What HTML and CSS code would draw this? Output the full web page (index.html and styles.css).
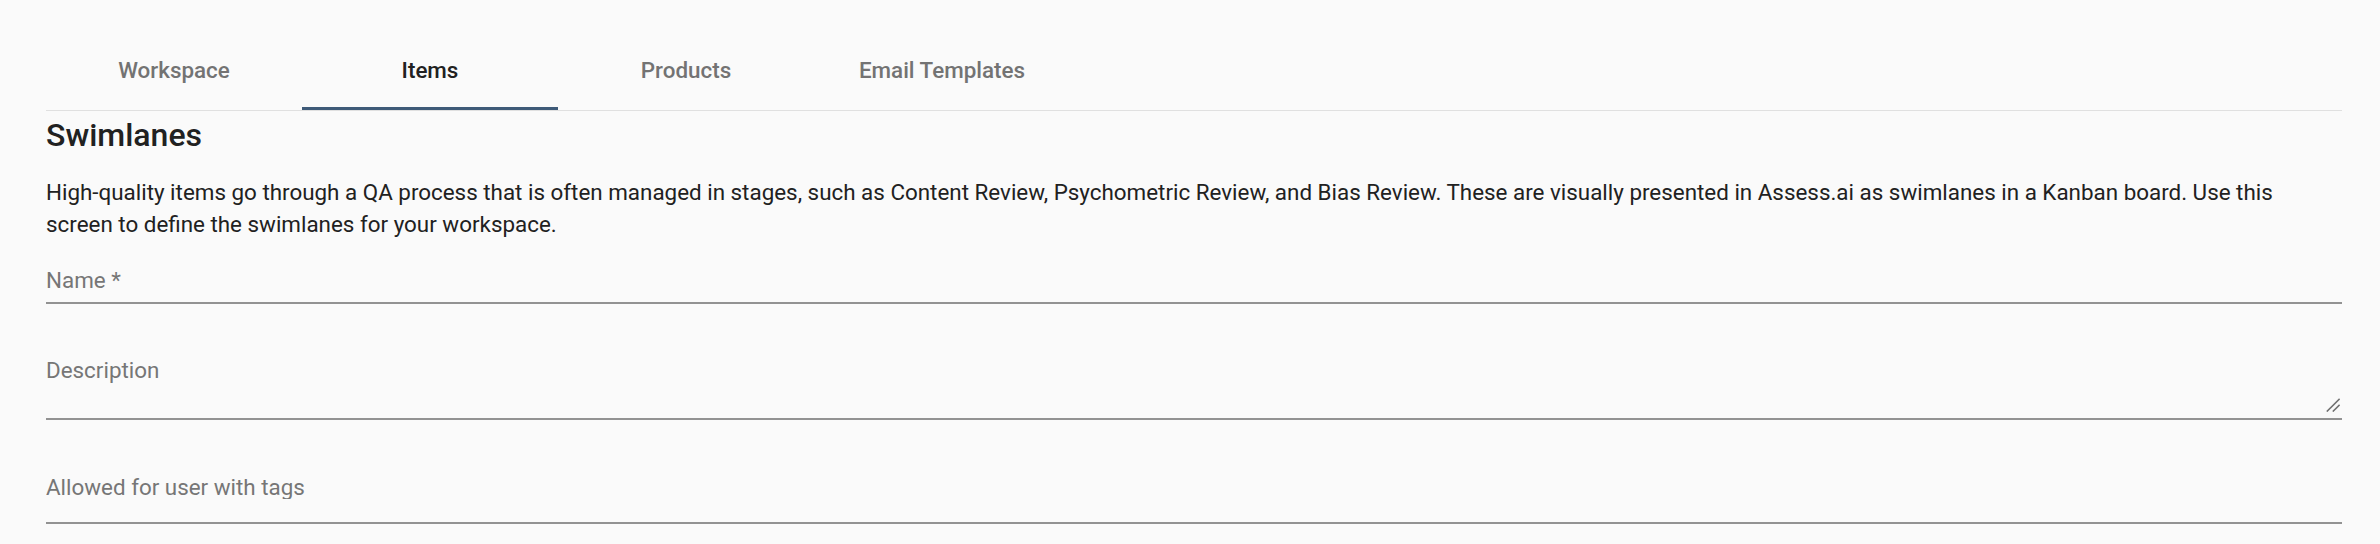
FILE: index.html
```html
<!DOCTYPE HTML>
<html>
<head>
    <meta charset="UTF-8">
    <title>Swimlanes</title>
    <link rel="stylesheet" href="styles.css">
</head>
<body>
<div id="page">

    <ul class="tabs">
        <li>Workspace</li>
        <li class="on">Items</li>
        <li>Products</li>
        <li>Email Templates</li>
    </ul>

    <div class="content">
        <h2 class="title">Swimlanes</h2>
        <p class="intro">High-quality items go through a QA process that is often managed in stages, such as Content Review, Psychometric Review, and Bias Review. These are visually presented in Assess.ai as swimlanes in a Kanban board. Use this screen to define the swimlanes for your workspace.</p>

        <form class="form">
            <div class="field">
                <input type="text" placeholder="Name *">
            </div>
            <div class="field field-area">
                <textarea placeholder="Description"></textarea>
                <svg class="grip" width="14" height="14" viewBox="0 0 14 14">
                    <line x1="0.8" y1="13.6" x2="13.6" y2="0.8"/>
                    <line x1="6.8" y1="13.6" x2="13.6" y2="6.8"/>
                </svg>
            </div>
            <div class="field field-tags">
                <input type="text" placeholder="Allowed for user with tags">
            </div>
        </form>
    </div>

</div>
</body>
</html>
```

FILE: styles.css
```css
body{margin:0;background:#fafafa;color:#212121;font-family:Roboto,"Noto Sans",sans-serif;}
h1,h2,h3,p{margin:0;}
ol,ul,li{margin:0;padding:0;list-style:none;}

#page{
    padding: 33px 38px 0 46px;
}

/* tabs */
.tabs{
    display: flex;
    border-bottom: 1px solid #e0e0e0;
}
.tabs li{
    display: flex;
    align-items: center;
    justify-content: center;
    box-sizing: border-box;
    width: 256px;
    height: 77px;
    padding-bottom: 4px;
    color: #737373;
    font-size: 22.4px;
    font-weight: 500;
    cursor: pointer;
}
.tabs li.on{
    padding-bottom: 1px;
    border-bottom: 3px solid #3e5a78;
    color: #212121;
}

/* content */
.title{
    font-size: 32px;
    font-weight: 500;
    line-height: 49px;
}
.intro{
    margin-top: 16px;
    font-size: 22.4px;
    line-height: 32px;
}

/* form */
.field{
    position: relative;
    padding: 27.5px 0 10px;
    margin-bottom: 27px;
    border-bottom: 2px solid #929292;
}
.field-area{
    padding-bottom: 8px;
}
.field-tags{
    padding-bottom: 23px;
}
.field input,
.field textarea{
    display: block;
    box-sizing: border-box;
    width: 100%;
    height: 24px;
    margin: 0;
    padding: 0;
    border: none;
    outline: none;
    background: transparent;
    color: #212121;
    font-family: inherit;
    font-size: 22.4px;
    line-height: 24px;
}
.field textarea{
    height: 52px;
    resize: none;
}
.field input::placeholder,
.field textarea::placeholder{
    color: #767676;
    opacity: 1;
}
.field .grip{
    position: absolute;
    right: 2px;
    bottom: 6px;
    stroke: #6f6f6f;
    stroke-width: 1.5;
}
```
